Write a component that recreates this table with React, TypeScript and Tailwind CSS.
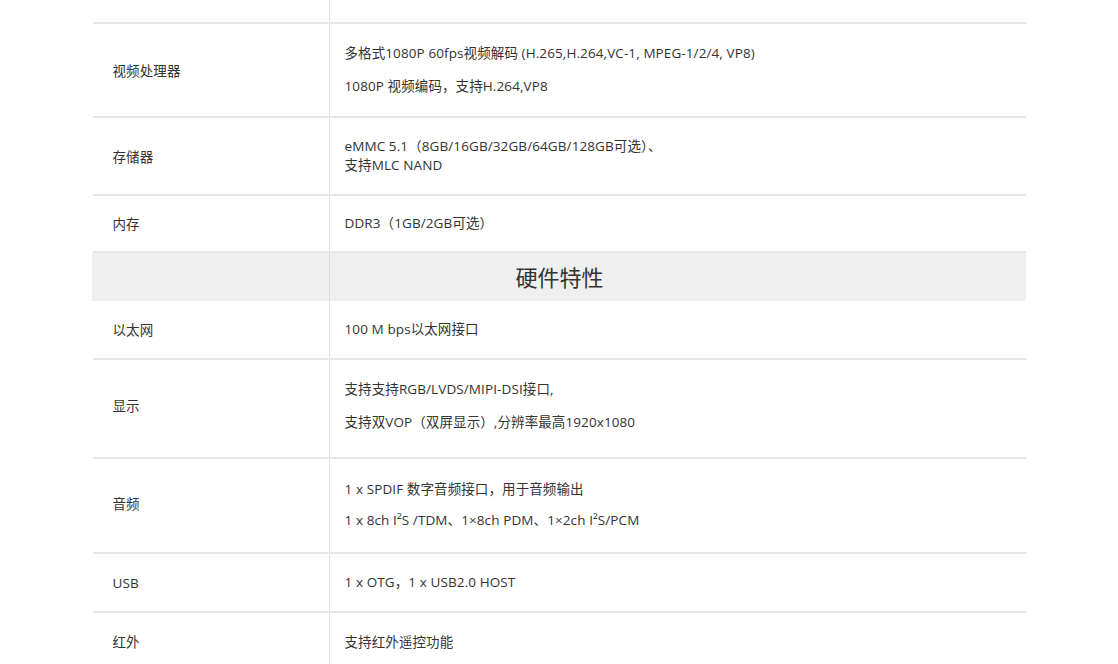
const FONT = "font-['Segoe_UI','Open_Sans','Noto_Sans_CJK_SC',sans-serif]";

type Row = { label: string; lines: string[][]; h: string; pad?: string; gap?: string };

const TOP: Row[] = [
  {
    label: "视频处理器",
    h: "h-[94px]",
    lines: [["多格式1080P 60fps视频解码 (H.265,H.264,VC-1, MPEG-1/2/4, VP8)"], ["1080P 视频编码，支持H.264,VP8"]],
  },
  {
    label: "存储器",
    h: "h-[78px]",
    lines: [["eMMC 5.1（8GB/16GB/32GB/64GB/128GB可选）、", "支持MLC NAND"]],
  },
  { label: "内存", h: "h-[57px]", lines: [["DDR3（1GB/2GB可选）"]] },
];

const HW: Row[] = [
  { label: "以太网", h: "h-[59px]", lines: [["100 M bps以太网接口"]] },
  {
    label: "显示",
    h: "h-[99px]",
    pad: "pb-[5px]",
    lines: [["支持支持RGB/LVDS/MIPI-DSI接口,"], ["支持双VOP（双屏显示）,分辨率最高1920x1080"]],
  },
  {
    label: "音频",
    h: "h-[95px]",
    pad: "pb-[2px]",
    gap: "gap-[12px]",
    lines: [["1 x SPDIF 数字音频接口，用于音频输出"], ["1 x 8ch I²S /TDM、1×8ch PDM、1×2ch I²S/PCM"]],
  },
  { label: "USB", h: "h-[59px]", lines: [["1 x OTG，1 x USB2.0 HOST"]] },
  { label: "红外", h: "h-[64px]", pad: "pb-[6px]", lines: [["支持红外遥控功能"]] },
];

function SpecRow({ row, last }: { row: Row; last?: boolean }) {
  const pad = row.pad ?? "";
  return (
    <div className={`flex ${row.h} ${last ? "" : "border-b-2 border-[#e6e6e6]"}`}>
      <div className={`flex w-[237px] shrink-0 items-center border-r border-[#dddddd] pl-[20px] ${pad || "pt-[2px]"}`}>
        {row.label}
      </div>
      <div className={`flex flex-1 flex-col justify-center pl-[15px] ${pad} ${row.gap ?? "gap-[14px]"}`}>
        {row.lines.map((p, i) => (
          <p key={i} className="leading-[19px]">
            {p.map((l, j) => (
              <span key={j} className="block">
                {l}
              </span>
            ))}
          </p>
        ))}
      </div>
    </div>
  );
}

export default function App() {
  return (
    <div className={`min-h-[664px] bg-white ${FONT} text-[13.5px] tracking-[0.1px] text-[#333333]`}>
      <div className="mx-auto w-[933px]">
        <div className="flex h-[24px] border-b-2 border-[#e6e6e6]">
          <div className="w-[237px] shrink-0 border-r border-[#dddddd]" />
          <div className="flex-1" />
        </div>
        {TOP.map((r) => (
          <SpecRow key={r.label} row={r} />
        ))}
        <div className="-ml-px flex h-[48px] bg-[#efefef]">
          <div className="w-[238px] shrink-0 border-r border-[#dddddd]" />
          <div className="flex flex-1 items-center justify-center pr-[236px] text-[22px] tracking-normal text-[#333333]">
            硬件特性
          </div>
        </div>
        {HW.map((r, i) => (
          <SpecRow key={r.label} row={r} last={i === HW.length - 1} />
        ))}
      </div>
    </div>
  );
}
